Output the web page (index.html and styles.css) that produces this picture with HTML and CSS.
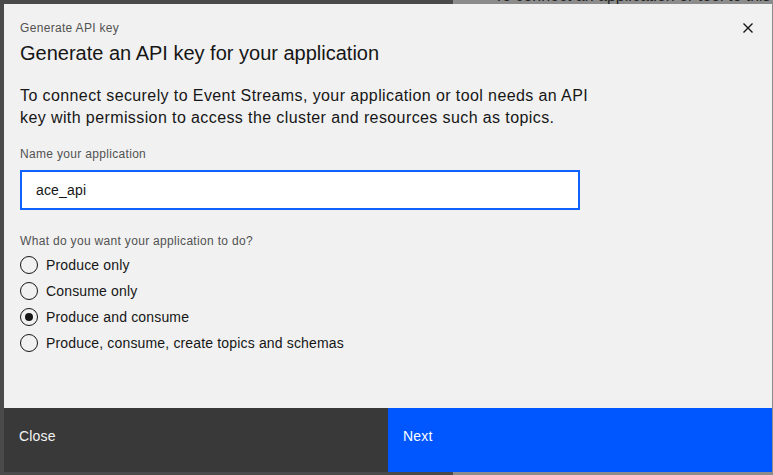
FILE: index.html
```html
<!DOCTYPE html>
<html lang="en">
<head>
<meta charset="utf-8">
<title>Generate API key</title>
<link rel="stylesheet" href="styles.css">
</head>
<body>
<div class="backdrop">
  <div class="bg-left"></div>
  <div class="bg-right"><p class="bg-text">To connect an application or tool to this cluster, you will need the</p></div>
</div>
<div class="modal" role="dialog" aria-label="Generate API key">
  <header class="modal-header">
    <p class="modal-label">Generate API key</p>
    <h2 class="modal-title">Generate an API key for your application</h2>
    <button class="modal-close" aria-label="Close">
      <svg width="16" height="16" viewBox="0 0 16 16"><path d="M3.5 3.5 L12.5 12.5 M12.5 3.5 L3.5 12.5" stroke="#161616" stroke-width="1.4" fill="none"/></svg>
    </button>
  </header>
  <div class="modal-body">
    <p class="intro">To connect securely to Event Streams, your application or tool needs an API key with permission to access the cluster and resources such as topics.</p>
    <label class="field-label">Name your application</label>
    <div class="text-input">ace_api</div>
    <p class="field-label group-label">What do you want your application to do?</p>
    <ul class="radios">
      <li class="radio"><span class="dot"></span>Produce only</li>
      <li class="radio"><span class="dot"></span>Consume only</li>
      <li class="radio checked"><span class="dot"></span>Produce and consume</li>
      <li class="radio"><span class="dot"></span>Produce, consume, create topics and schemas</li>
    </ul>
  </div>
  <footer class="modal-footer">
    <button class="btn btn-secondary">Close</button>
    <button class="btn btn-primary">Next</button>
  </footer>
</div>
</body>
</html>
```
FILE: styles.css
```css
* { box-sizing: border-box; }
html, body { margin: 0; padding: 0; }
body {
  width: 773px;
  height: 475px;
  overflow: hidden;
  font-family: "Liberation Sans", Arial, sans-serif;
  color: #161616;
  background: #4a4a4a;
}
.backdrop {
  display: flex;
  height: 475px;
}
.bg-left {
  width: 453px;
  background: #4a4a4a;
}
.bg-right {
  flex: 1;
  background: #8c8c8c;
  overflow: hidden;
}
.bg-text {
  margin: -12px 0 0 41px;
  font-size: 16px;
  line-height: 16px;
  color: #222;
  white-space: nowrap;
}
.modal {
  position: absolute;
  left: 4px;
  top: 4px;
  width: 768px;
  height: 468px;
  background: #f1f1f1;
  display: flex;
  flex-direction: column;
}
.modal-header {
  position: relative;
  padding: 16px 16px 0 16px;
}
.modal-label {
  margin: 0;
  font-size: 12px;
  line-height: 16px;
  letter-spacing: 0.32px;
  color: #525252;
}
.modal-title {
  margin: 4px 0 0;
  font-size: 20px;
  line-height: 26px;
  font-weight: 400;
  color: #161616;
}
.modal-close {
  position: absolute;
  right: 16px;
  top: 16px;
  width: 16px;
  height: 16px;
  padding: 0;
  border: 0;
  background: none;
}
.modal-body {
  flex: 1;
  padding: 19px 16px 0 16px;
}
.intro {
  margin: 0;
  width: 580px;
  font-size: 16px;
  line-height: 22px;
  letter-spacing: 0.4px;
  color: #161616;
}
.field-label {
  display: block;
  margin: 17px 0 0;
  font-size: 12px;
  line-height: 16px;
  letter-spacing: 0.32px;
  color: #525252;
}
.text-input {
  margin-top: 8px;
  width: 560px;
  height: 40px;
  background: #fff;
  border: 2px solid #0f62fe;
  padding: 0 14px;
  font-size: 14px;
  line-height: 36px;
  letter-spacing: 0.16px;
  color: #161616;
}
.group-label {
  margin-top: 23px;
}
.radios {
  list-style: none;
  margin: 3px 0 0;
  padding: 0;
}
.radio {
  display: flex;
  align-items: center;
  gap: 8px;
  height: 26px;
  font-size: 14px;
  letter-spacing: 0.16px;
  color: #161616;
}
.dot {
  width: 18px;
  height: 18px;
  border: 1px solid #161616;
  border-radius: 50%;
  display: flex;
  align-items: center;
  justify-content: center;
}
.checked .dot::after {
  content: "";
  width: 8px;
  height: 8px;
  border-radius: 50%;
  background: #161616;
}
.modal-footer {
  display: flex;
  height: 64px;
}
.btn {
  flex: 1;
  border: 0;
  margin: 0;
  text-align: left;
  font-family: inherit;
  font-size: 14px;
  letter-spacing: 0.16px;
  padding: 0 15px 8px;
  color: #f4f4f4;
}
.btn-secondary { background: #393939; }
.btn-primary { background: #0057ff; color: #fff; }
```
